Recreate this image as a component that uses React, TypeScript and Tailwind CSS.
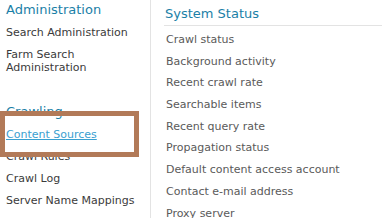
import React from "react";

export default function App() {
  const right = [
    "Crawl status",
    "Background activity",
    "Recent crawl rate",
    "Searchable items",
    "Recent query rate",
    "Propagation status",
    "Default content access account",
    "Contact e-mail address",
    "Proxy server",
  ];
  return (
    <div className="w-[382px] h-[218px] overflow-hidden bg-white flex font-['DejaVu_Sans',Verdana,sans-serif]">
      <div className="w-[151px] shrink-0 border-r border-[#e3e3e3] pl-[6px] relative">
        <div className="text-[13px] leading-[16px] text-[#1b7fa7] mt-[2px]">Administration</div>
        <div className="mt-[8px] text-[11px] leading-[13px] text-[#3b3b3b]">
          <div className="pb-[9px]">Search Administration</div>
          <div className="w-[120px]">Farm Search Administration</div>
        </div>
        <div className="text-[13px] leading-[16px] text-[#1b7fa7] mt-[30px]">Crawling</div>
        <div className="mt-[8px] text-[11px] leading-[13px] text-[#3b3b3b]">
          <div className="pb-[9px] text-[#3aa0d0] underline">Content Sources</div>
          <div className="pb-[9px]">Crawl Rules</div>
          <div className="pb-[9px]">Crawl Log</div>
          <div className="pb-[9px]">Server Name Mappings</div>
          <div className="pb-[9px]">Host Distribution Rules</div>
        </div>
        <div className="absolute left-0 top-[111px] w-[139px] h-[46px] border-[5px] border-[#b27a58]" />
      </div>
      <div className="flex-1 pl-[13px]">
        <div className="text-[13px] leading-[16px] text-[#1b7fa7] mt-[6px] pl-[1px] pb-[3px] border-b border-[#e3e3e3]">
          System Status
        </div>
        <div className="text-[11px] leading-[13px] text-[#5a5a5a] pl-[2px] mt-[7px]">
          {right.map((t) => (
            <div key={t} className="pb-[8.7px]">{t}</div>
          ))}
        </div>
      </div>
    </div>
  );
}
